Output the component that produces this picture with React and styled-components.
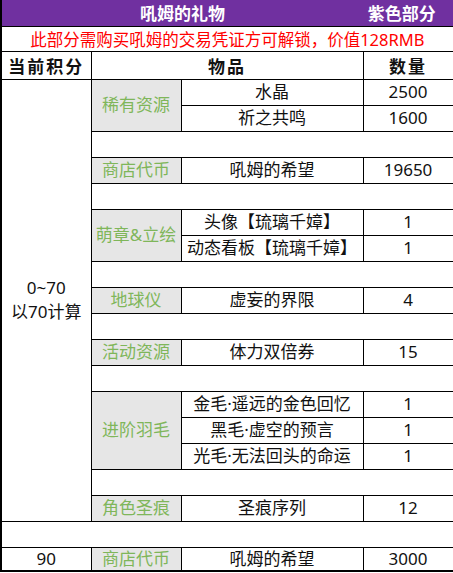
import React from 'react';
import styled, {createGlobalStyle} from 'styled-components';

const GlobalStyle = createGlobalStyle`
    body {
        margin: 0;
        background: #ffffff;
        font-family: "Noto Sans", "Noto Sans CJK SC", sans-serif;
    }
`;

const Sheet = styled.table`
    width: 453px;
    table-layout: fixed;
    border-collapse: collapse;
    border-left: 2px solid #000;
    border-right: 3px solid #000;
    border-bottom: 2px solid #000;
    font-size: 17px;
    color: #111;
`;

const Row = styled.tr`
    height: ${p => p.$h || 26}px;
`;

const TitleCell = styled.td`
    background: #7030a0;
    color: #fff;
    font-weight: bold;
    font-size: 17px;
    text-align: center;
    padding: 0;
    padding-right: ${p => p.$right ? 12 : 0}px;
    border-bottom: 1px solid #000;
`;

const NoticeCell = styled.td`
    color: #ff0000;
    text-align: center;
    padding: 0;
    border: 1px solid #000;
    font-size: 16.5px;
`;

const HeadCell = styled.th`
    font-weight: bold;
    text-align: center;
    padding: 0;
    border: 1px solid #000;
    font-size: 17px;
    letter-spacing: ${p => p.$wide ? 2 : 0}px;
`;

const Cell = styled.td`
    text-align: center;
    padding: 0;
    border: 1px solid #000;
    white-space: nowrap;
    line-height: ${p => p.$tall ? 1.4 : 1.2};
`;

const CategoryCell = styled(Cell)`
    background: #e6e6e6;
    color: #7fb65a;
`;

const groups = [
    {cat: '稀有资源', items: [['水晶', '2500'], ['祈之共鸣', '1600']]},
    {cat: '商店代币', items: [['吼姆的希望', '19650']]},
    {cat: '萌章&立绘', items: [['头像【琉璃千嫜】', '1'], ['动态看板【琉璃千嫜】', '1']]},
    {cat: '地球仪', items: [['虚妄的界限', '4']]},
    {cat: '活动资源', items: [['体力双倍券', '15']]},
    {cat: '进阶羽毛', items: [['金毛·遥远的金色回忆', '1'], ['黑毛·虚空的预言', '1'], ['光毛·无法回头的命运', '1']]},
    {cat: '角色圣痕', items: [['圣痕序列', '12']]},
];

const buildRows = () => {
    const rows = [];
    const total = groups.reduce((n, g) => n + g.items.length, 0) + groups.length - 1;
    groups.forEach((g, gi) => {
        if (gi > 0) {
            rows.push(
                <Row key={'gap' + gi}>
                    <Cell colSpan={3}/>
                </Row>
            );
        }
        g.items.forEach(([name, qty], ii) => {
            rows.push(
                <Row key={g.cat + ii}>
                    {gi === 0 && ii === 0 && (
                        <Cell rowSpan={total} $tall>0~70<br/>以70计算</Cell>
                    )}
                    {ii === 0 && <CategoryCell rowSpan={g.items.length}>{g.cat}</CategoryCell>}
                    <Cell>{name}</Cell>
                    <Cell>{qty}</Cell>
                </Row>
            );
        });
    });
    return rows;
};

const App = () => {
    return (
        <>
            <GlobalStyle/>
            <Sheet>
                <colgroup>
                    <col style={{width: 90}}/>
                    <col style={{width: 90}}/>
                    <col style={{width: 182}}/>
                    <col style={{width: 91}}/>
                </colgroup>
                <tbody>
                <Row $h={26}>
                    <TitleCell colSpan={3}>吼姆的礼物</TitleCell>
                    <TitleCell $right>紫色部分</TitleCell>
                </Row>
                <Row $h={25}>
                    <NoticeCell colSpan={4}>此部分需购买吼姆的交易凭证方可解锁，价值128RMB</NoticeCell>
                </Row>
                <Row $h={28}>
                    <HeadCell $wide>当前积分</HeadCell>
                    <HeadCell colSpan={2} $wide>物品</HeadCell>
                    <HeadCell $wide>数量</HeadCell>
                </Row>
                {buildRows()}
                <Row>
                    <Cell colSpan={4}/>
                </Row>
                <Row $h={24}>
                    <Cell>90</Cell>
                    <CategoryCell>商店代币</CategoryCell>
                    <Cell>吼姆的希望</Cell>
                    <Cell>3000</Cell>
                </Row>
                </tbody>
            </Sheet>
        </>
    );
};

export default App;
